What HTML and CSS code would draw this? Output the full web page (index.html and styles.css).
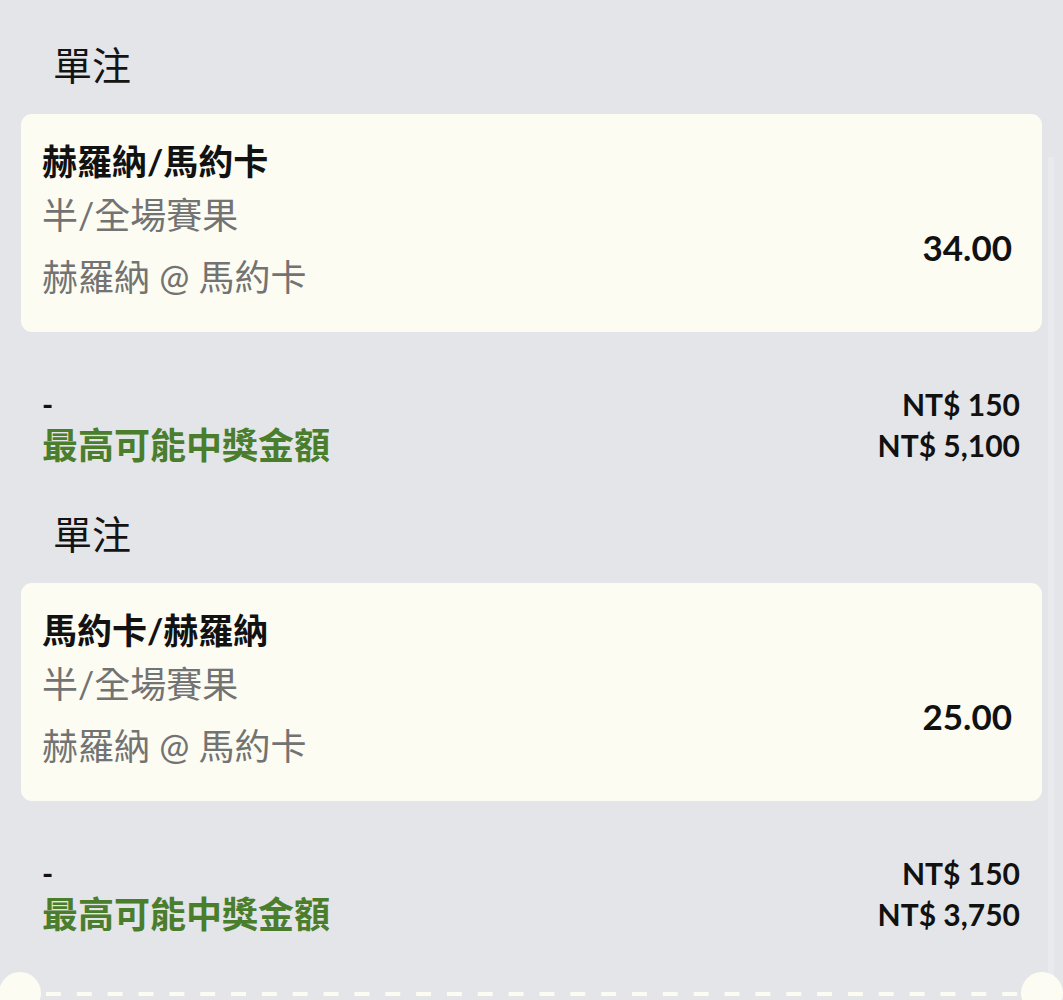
FILE: index.html
```html
<!DOCTYPE html>
<html lang="zh-Hant">
<head>
<meta charset="utf-8">
<title>單注</title>
<link rel="stylesheet" href="styles.css">
</head>
<body>
<div class="page">
  <section class="bet">
    <h2 class="bet-title">單注</h2>
    <div class="card">
      <div class="card-info">
        <div class="card-match">赫羅納/馬約卡</div>
        <div class="card-market">半/全場賽果</div>
        <div class="card-pick">赫羅納 @ 馬約卡</div>
      </div>
      <div class="card-odds">34.00</div>
    </div>
    <div class="summary">
      <div class="summary-row">
        <span class="summary-dash">-</span>
        <span class="summary-amount">NT$ 150</span>
      </div>
      <div class="summary-row summary-row-win">
        <span class="summary-label">最高可能中獎金額</span>
        <span class="summary-amount">NT$ 5,100</span>
      </div>
    </div>
  </section>

  <section class="bet">
    <h2 class="bet-title">單注</h2>
    <div class="card">
      <div class="card-info">
        <div class="card-match">馬約卡/赫羅納</div>
        <div class="card-market">半/全場賽果</div>
        <div class="card-pick">赫羅納 @ 馬約卡</div>
      </div>
      <div class="card-odds">25.00</div>
    </div>
    <div class="summary">
      <div class="summary-row">
        <span class="summary-dash">-</span>
        <span class="summary-amount">NT$ 150</span>
      </div>
      <div class="summary-row summary-row-win">
        <span class="summary-label">最高可能中獎金額</span>
        <span class="summary-amount">NT$ 3,750</span>
      </div>
    </div>
  </section>

  <div class="ticket-edge">
    <span class="notch notch-left"></span>
    <span class="perforation"></span>
    <span class="notch notch-right"></span>
  </div>

  <div class="scroll-track"></div>
</div>
</body>
</html>
```

FILE: styles.css
```css
html, body {
  margin: 0;
  padding: 0;
  height: 1000px;
  overflow: hidden;
  background: #e4e5e9;
}

.page {
  position: relative;
  width: 1063px;
  font-family: Lato, "Noto Sans CJK TC", "Noto Sans", sans-serif;
  color: #111;
}

.bet {
  padding: 0 21px 3px 21px;
}

.bet-title {
  margin: 0 0 26px 0;
  padding: 38px 0 0 32px;
  font-size: 39px;
  font-weight: 400;
  line-height: 50px;
  color: #141414;
  font-family: "Noto Sans CJK TC", sans-serif;
}

.card {
  display: flex;
  justify-content: space-between;
  height: 218px;
  box-sizing: border-box;
  padding: 22px 30px 26px 21px;
  background: #fcfcf2;
  border-radius: 11px;
}

.card-info {
  display: flex;
  flex-direction: column;
}

.card-match {
  font-size: 35px;
  font-weight: 700;
  line-height: 50px;
  color: #121212;
}

.card-market {
  font-size: 36px;
  font-weight: 400;
  line-height: 58px;
  color: #737373;
}

.card-pick {
  margin-top: 4px;
  font-size: 36px;
  font-weight: 400;
  line-height: 58px;
  color: #737373;
}

.card-odds {
  align-self: center;
  margin-top: 52px;
  font-size: 35px;
  font-weight: 700;
  line-height: 40px;
  color: #111;
}

.summary {
  margin-top: 52px;
  padding: 0 22px 0 21px;
}

.summary-row {
  display: flex;
  justify-content: space-between;
  align-items: center;
  height: 40px;
}

.summary-row-win {
  height: 42px;
}

.summary-dash {
  font-size: 30px;
  font-weight: 700;
  line-height: 40px;
}

.summary-label {
  font-size: 36px;
  font-weight: 700;
  line-height: 42px;
  color: #4a7d2c;
}

.summary-amount {
  font-size: 30px;
  font-weight: 700;
  line-height: 40px;
  color: #111;
}

.ticket-edge {
  display: flex;
  align-items: flex-start;
  height: 62px;
}

.notch {
  flex: 0 0 42px;
  height: 42px;
  margin-top: 34px;
  border-radius: 50%;
  background: #fcfcf2;
}

.notch-left {
  margin-left: -1px;
}

.perforation {
  flex: 1;
  height: 4px;
  margin-top: 54px;
  background-image: linear-gradient(to right, #fcfcf2 0 15px, transparent 15px 100%);
  background-size: 30.85px 4px;
  background-position: 5px 0;
  background-repeat: repeat-x;
}

.scroll-track {
  position: absolute;
  top: 157px;
  left: 1048px;
  width: 6px;
  height: 843px;
  background: rgba(255, 255, 255, 0.22);
}
```
